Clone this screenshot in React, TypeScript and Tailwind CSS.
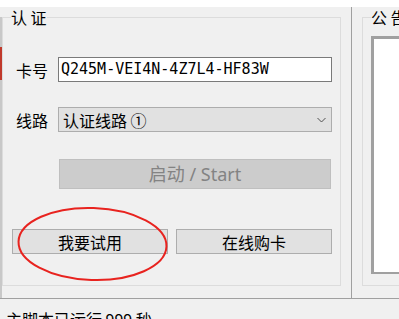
import React from "react";

export default function App() {
  const cjk = "font-['Noto_Sans_CJK_SC',sans-serif]";
  return (
    <div className={`relative w-[399px] h-[319px] overflow-hidden bg-[#f0f0f0] text-black ${cjk}`}>
      <div className="h-[7px] bg-white" />
      <div className="flex h-[292px] border-b border-[#a0a0a0]">
        <div className="flex w-[2px] shrink-0 flex-col">
          <div className="h-[10px]" />
          <div className="h-[30px] bg-[#c8c8c8]" />
          <div className="h-[33px] bg-[#c0392b]" />
          <div className="flex-1 bg-[#c8c8c8]" />
        </div>
        <fieldset className="m-0 h-[279px] w-[339px] shrink-0 border border-[#dcdcdc] p-0">
          <legend className="ml-[8px] px-0 text-[16px] leading-[20px]">认&nbsp;证</legend>
          <div className="mt-[30px] flex items-center">
            <span className="w-[55px] pl-[13px] text-[16px] leading-[20px]">卡号</span>
            <div className="flex h-[25px] w-[274px] items-center border border-[#7a7a7a] bg-white pl-[2px] font-['DejaVu_Sans_Mono',monospace] text-[15px]">
              Q245M-VEI4N-4Z7L4-HF83W
            </div>
          </div>
          <div className="mt-[25px] flex items-center">
            <span className="w-[55px] pl-[13px] text-[16px] leading-[20px]">线路</span>
            <div className="flex h-[25px] w-[274px] items-center justify-between border border-[#adadad] bg-[#e1e1e1] pl-[4px] pr-[5px] text-[16px]">
              <span>认证线路 ①</span>
              <svg width="9" height="6" viewBox="0 0 9 6">
                <polyline points="0.5,1 4.5,5 8.5,1" fill="none" stroke="#505050" strokeWidth="1" />
              </svg>
            </div>
          </div>
          <div className="ml-[56px] mt-[27px] flex h-[30px] w-[272px] items-center justify-center border border-[#bfbfbf] bg-[#cccccc] font-['Noto_Sans','Noto_Sans_CJK_SC',sans-serif] text-[18px] text-[#838383]">
            启动 / Start
          </div>
          <div className="ml-[9px] mt-[40px] flex gap-[8px]">
            <div className="flex h-[25px] w-[156px] items-center justify-center border border-[#adadad] bg-[#e1e1e1] text-[16px]">
              我要试用
            </div>
            <div className="flex h-[25px] w-[156px] items-center justify-center border border-[#adadad] bg-[#e1e1e1] text-[16px]">
              在线购卡
            </div>
          </div>
        </fieldset>
        <div className="ml-[10px] w-px shrink-0 bg-[#a0a0a0]" />
        <fieldset className="m-0 ml-[10px] h-[279px] w-[60px] shrink-0 border border-[#dcdcdc] p-0">
          <legend className="ml-[8px] px-0 text-[16px] leading-[20px] whitespace-nowrap">公&nbsp;告</legend>
          <div className="ml-[8px] mt-[9px] h-[238px] w-[60px] border-b-[2px] border-l-[3px] border-t-[3px] border-[#a0a0a0] bg-white" />
        </fieldset>
      </div>
      <div className="pl-[6px] pt-[10px] text-[16px] leading-[20px] whitespace-nowrap">主脚本已运行 999 秒</div>
      <svg className="absolute left-0 top-0" width="399" height="319" viewBox="0 0 399 319">
        <ellipse cx="92.5" cy="244" rx="74" ry="36" fill="none" stroke="#e8231f" strokeWidth="2" transform="rotate(2 92.5 244)" />
      </svg>
    </div>
  );
}
